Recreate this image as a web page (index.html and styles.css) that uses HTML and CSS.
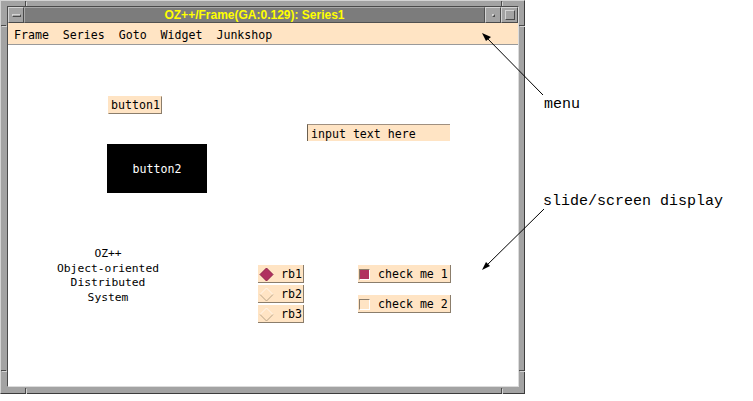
FILE: index.html
```html
<!DOCTYPE html>
<html>
<head>
<meta charset="utf-8">
<link rel="stylesheet" href="styles.css">
</head>
<body>
<div class="page">
  <div class="window">
    <span class="notch nt n-left"></span>
    <span class="notch nt n-right"></span>
    <span class="notch nb n-left"></span>
    <span class="notch nb n-right"></span>
    <span class="notch nl n-top"></span>
    <span class="notch nl n-bottom"></span>
    <span class="notch nr n-top"></span>
    <span class="notch nr n-bottom"></span>
    <div class="inner">
      <div class="titlebar">
        <div class="tb-btn"><span class="bar"></span></div>
        <div class="title">OZ++/Frame(GA:0.129): Series1</div>
        <div class="tb-btn"><span class="dot"></span></div>
        <div class="tb-btn"><span class="sq"></span></div>
      </div>
      <div class="menubar">Frame  Series  Goto  Widget  Junkshop</div>
      <div class="canvas">
        <div class="btn btn1">button1</div>
        <div class="btn2">button2</div>
        <div class="input">input text here</div>
        <div class="caption">OZ++<br>Object-oriented<br>Distributed<br>System</div>
        <div class="radios">
          <div class="radio"><svg class="dia" width="15" height="15" viewBox="0 0 15 15"><polygon points="7.5,1 14,7.5 7.5,14 1,7.5" class="on"/></svg><span>rb1</span></div>
          <div class="radio"><svg class="dia" width="15" height="15" viewBox="0 0 15 15"><polyline points="1,7.5 7.5,1 14,7.5" class="hl"/><polyline points="1,7.5 7.5,14 14,7.5" class="sh"/></svg><span>rb2</span></div>
          <div class="radio"><svg class="dia" width="15" height="15" viewBox="0 0 15 15"><polyline points="1,7.5 7.5,1 14,7.5" class="hl"/><polyline points="1,7.5 7.5,14 14,7.5" class="sh"/></svg><span>rb3</span></div>
        </div>
        <div class="checks">
          <div class="check"><span class="box checked"></span><span>check me 1</span></div>
          <div class="check"><span class="box"></span><span>check me 2</span></div>
        </div>
      </div>
    </div>
  </div>
  <div class="label label-menu">menu</div>
  <div class="label label-slide">slide/screen display</div>
  <svg class="arrows" width="753" height="401" viewBox="0 0 753 401">
    <line x1="543" y1="95" x2="484" y2="35" stroke="#000" stroke-width="1"/>
    <polygon points="482,33 491,37 486,41" fill="#000"/>
    <line x1="544" y1="209" x2="484" y2="268" stroke="#000" stroke-width="1"/>
    <polygon points="482,270 486,262 490,266" fill="#000"/>
  </svg>
</div>
</body>
</html>
```
FILE: styles.css
```css
html, body {
  margin: 0;
  padding: 0;
  background: #ffffff;
}
.page {
  position: relative;
  width: 753px;
  height: 401px;
  overflow: hidden;
}
.window {
  position: relative;
  width: 525px;
  height: 394px;
  box-sizing: border-box;
  background: #a3a3a3;
  border: 1px solid;
  border-color: #d4d4d4 #3c3c3c #3c3c3c #d4d4d4;
  padding: 5px 5px 6px 6px;
  display: flex;
}
.notch {
  position: absolute;
  background: #4a4a4a;
  box-shadow: 1px 1px 0 #d4d4d4;
}
.nt, .nb { width: 1px; height: 5px; }
.nt { top: 0; }
.nb { bottom: 0; }
.n-left { left: 24px; }
.n-right { right: 22px; }
.nl, .nr { width: 5px; height: 1px; }
.nl { left: 0; }
.nr { right: 0; }
.n-top { top: 24px; }
.n-bottom { bottom: 22px; }
.inner {
  flex: 1;
  display: flex;
  flex-direction: column;
  border: 1px solid;
  border-color: #4a4a4a #dcdcdc #dcdcdc #4a4a4a;
  position: relative;
  z-index: 1;
}
.titlebar {
  height: 16px;
  display: flex;
  flex: none;
}
.tb-btn {
  width: 16px;
  height: 16px;
  box-sizing: border-box;
  background: #a3a3a3;
  border: 1px solid;
  border-color: #d4d4d4 #4a4a4a #4a4a4a #d4d4d4;
  display: flex;
  align-items: center;
  justify-content: center;
}
.tb-btn + .tb-btn { width: 17px; }
.bar {
  width: 9px;
  height: 3px;
  box-sizing: border-box;
  border: 1px solid;
  border-color: #d4d4d4 #4a4a4a #4a4a4a #d4d4d4;
}
.dot {
  width: 3px;
  height: 3px;
  box-sizing: border-box;
  border: 1px solid;
  border-color: #d4d4d4 #4a4a4a #4a4a4a #d4d4d4;
}
.sq {
  width: 10px;
  height: 10px;
  box-sizing: border-box;
  border: 1px solid;
  border-color: #d4d4d4 #4a4a4a #4a4a4a #d4d4d4;
}
.title {
  flex: 1;
  box-sizing: border-box;
  height: 16px;
  background: #7c7c7c;
  border: 1px solid;
  border-color: #a8a8a8 #505050 #505050 #a8a8a8;
  color: #ffff00;
  font-family: "Liberation Sans", Arial, sans-serif;
  font-weight: bold;
  font-size: 12px;
  line-height: 14px;
  text-align: center;
}
.menubar {
  flex: none;
  height: 22px;
  box-sizing: border-box;
  background: #ffe4c4;
  border-bottom: 1px solid #9a9a9a;
  font-family: "DejaVu Sans Mono", monospace;
  font-size: 11.6px;
  line-height: 21px;
  padding-top: 2px;
  padding-left: 6px;
  white-space: pre;
  color: #000;
}
.canvas {
  flex: 1;
  position: relative;
  background: #ffffff;
  font-family: "DejaVu Sans Mono", monospace;
  font-size: 11.6px;
  color: #000;
}
.btn {
  box-sizing: border-box;
  background: #ffe4c4;
  border: 1px solid;
  border-color: #ffe4c4 #8b7d6b #8b7d6b #ffe4c4;
  line-height: 16px;
}
.btn1 {
  position: absolute;
  left: 100px;
  top: 51px;
  width: 54px;
  height: 18px;
  padding-left: 2px;
}
.btn2 {
  position: absolute;
  left: 99px;
  top: 99px;
  width: 100px;
  height: 49px;
  background: #000;
  color: #fff;
  display: flex;
  align-items: center;
  justify-content: center;
}
.input {
  position: absolute;
  left: 299px;
  top: 79px;
  width: 143px;
  height: 17px;
  box-sizing: border-box;
  background: #ffe4c4;
  border-top: 1px solid #a09080;
  border-left: 1px solid #6b6050;
  padding-left: 3px;
  padding-top: 1px;
  line-height: 17px;
}
.caption {
  position: absolute;
  left: 30px;
  top: 202px;
  width: 140px;
  text-align: center;
  line-height: 14.5px;
  font-size: 11.3px;
}
.radios {
  position: absolute;
  left: 250px;
  top: 220px;
  display: flex;
  flex-direction: column;
  gap: 2px;
}
.radio {
  width: 46px;
  height: 18px;
  box-sizing: border-box;
  background: #ffe4c4;
  border-right: 1px solid #8b7d6b;
  border-bottom: 1px solid #8b7d6b;
  display: flex;
  align-items: center;
  gap: 7px;
  padding-left: 1px;
  padding-top: 1px;
  line-height: 17px;
}
.dia { flex: none; }
.dia .on { fill: #b03060; stroke: #8a2048; stroke-width: 1; }
.dia .hl { fill: none; stroke: #fff7ee; stroke-width: 1; }
.dia .sh { fill: none; stroke: #b8a488; stroke-width: 1; }
.checks {
  position: absolute;
  left: 350px;
  top: 220px;
  display: flex;
  flex-direction: column;
  gap: 12px;
}
.check {
  width: 93px;
  height: 18px;
  box-sizing: border-box;
  background: #ffe4c4;
  border-right: 1px solid #8b7d6b;
  border-bottom: 1px solid #8b7d6b;
  display: flex;
  align-items: center;
  gap: 8px;
  padding-left: 1px;
  padding-top: 1px;
  line-height: 17px;
}
.box {
  width: 11px;
  height: 11px;
  box-sizing: border-box;
  border: 1px solid;
  border-color: #8b7d6b #ffffff #ffffff #8b7d6b;
  background: #ffe4c4;
  flex: none;
}
.box.checked { background: #b03060; }
.label {
  position: absolute;
  font-family: "Liberation Mono", "Courier New", monospace;
  font-size: 15px;
  line-height: 17px;
  color: #000;
  white-space: pre;
}
.label-menu { left: 544px; top: 96px; }
.label-slide { left: 543px; top: 193px; }
.arrows {
  position: absolute;
  left: 0;
  top: 0;
  z-index: 2;
  pointer-events: none;
}
```
